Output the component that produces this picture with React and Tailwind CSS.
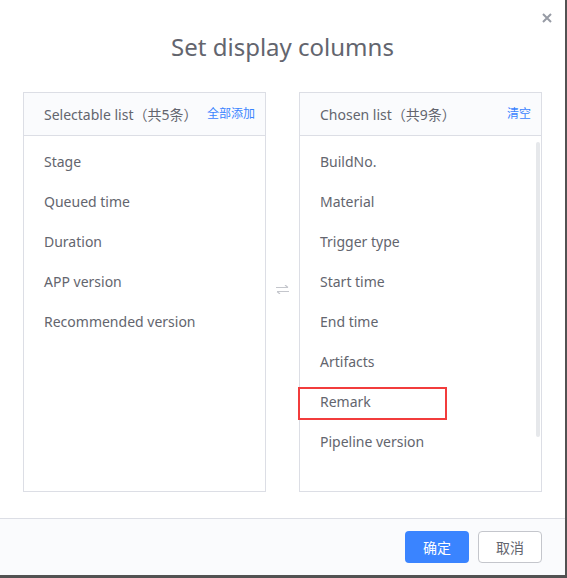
import React from 'react';

const selectable = ['Stage', 'Queued time', 'Duration', 'APP version', 'Recommended version'];
const chosen = ['BuildNo.', 'Material', 'Trigger type', 'Start time', 'End time', 'Artifacts', 'Remark', 'Pipeline version'];

const font = { fontFamily: '"Noto Sans", "Noto Sans CJK SC", sans-serif' };

function Panel({ title, action, items, scroll, mark }) {
  return <div className="relative flex h-[400px] w-[243px] flex-col border border-[#dcdee5] bg-white">
    <div className="flex h-[43px] shrink-0 items-center justify-between border-b border-[#dcdee5] bg-[#fafbfd] pl-5 pr-[10px]">
      <span className="text-[14px] text-[#63656e]">{title}</span>
      <span className="cursor-pointer text-[12px] text-[#3a84ff]">{action}</span>
    </div>
    <ul className="pt-[5px]">
      {items.map(item => <li key={item} className="relative flex h-10 items-center pl-5 text-[14px] text-[#63656e]">
        {item}
        {item === mark && <span className="absolute left-[-2px] top-[6px] h-[33px] w-[149px] border-2 border-[#f23c3c]" />}
      </li>)}
    </ul>
    {scroll && <div className="absolute right-[1px] top-[49px] h-[295px] w-[4px] rounded-sm bg-[#e6e8eb]" />}
  </div>;
}

export default function App() {
  return <div className="relative h-[578px] w-[567px] overflow-hidden bg-[#525252]" style={font}>
    <div className="relative flex h-[575px] w-[565px] flex-col bg-white">
      <button className="absolute right-[13px] top-[13px] grid h-[10px] w-[10px] place-items-center">
        <svg width="10" height="10" viewBox="0 0 10 10"><path d="M1 1 L9 9 M9 1 L1 9" stroke="#979ba5" strokeWidth="2" /></svg>
      </button>
      <h2 className="pt-[30px] text-center text-[24px] leading-[34px] text-[#63656e]">Set display columns</h2>
      <div className="mt-[28px] flex pl-[23px]">
        <Panel title="Selectable list（共5条）" action="全部添加" items={selectable} />
        <div className="flex w-[33px] items-center justify-center pb-[6px]">
          <svg width="13" height="9" viewBox="0 0 13 9">
            <path d="M0 2.5 H12 M9 0 L12 2.5" stroke="#c4c6cc" strokeWidth="1.2" fill="none" />
            <path d="M1 6.5 H13 M1 6.5 L4 9" stroke="#c4c6cc" strokeWidth="1.2" fill="none" />
          </svg>
        </div>
        <Panel title="Chosen list（共9条）" action="清空" items={chosen} scroll mark="Remark" />
      </div>
      <div className="mt-auto flex h-[57px] items-start justify-end gap-[9px] border-t border-[#dcdee5] bg-[#fafbfd] pr-[23px] pt-[12px]">
        <button className="h-8 w-[64px] rounded-sm bg-[#3a84ff] text-[14px] text-white">确定</button>
        <button className="h-8 w-[64px] rounded-sm border border-[#c4c6cc] bg-white text-[14px] text-[#63656e]">取消</button>
      </div>
    </div>
  </div>;
}
